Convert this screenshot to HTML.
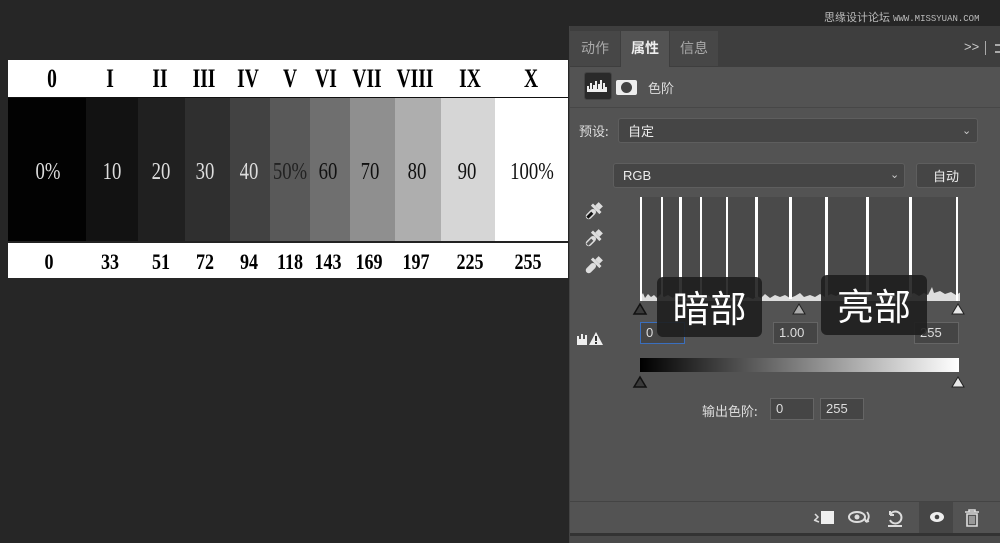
<!DOCTYPE html>
<html><head><meta charset="utf-8"><style>
*{margin:0;padding:0;box-sizing:border-box}
body{width:1000px;height:543px;background:#262626;position:relative;overflow:hidden;font-family:"Liberation Sans","Noto Sans CJK SC",sans-serif}
.a{position:absolute}
.chart{left:8px;top:60px;width:560px;height:218px;background:#fff}
.rn{top:0;height:37px;line-height:37px;font-family:"Liberation Serif",serif;font-weight:bold;font-size:26px;text-align:center;color:#000;transform:scaleX(.75)}
.col{top:38px;height:143px;font-family:"Liberation Serif",serif;font-size:24px;text-align:center;line-height:148px;transform:scaleX(.78)}
.bn{top:183px;height:35px;line-height:38px;font-family:"Liberation Serif",serif;font-weight:bold;font-size:22px;text-align:center;color:#000;transform:scaleX(.82)}
.cjk{font-family:"Noto Sans CJK SC",sans-serif}
.box{background:#454545;border:1px solid #656565;color:#ddd;font-size:13px;padding-left:5px;line-height:20px}
</style></head><body>
<div class="a" style="left:824px;top:9px;color:#bbb;font-size:11px;white-space:nowrap">思缘设计论坛 <span style="font-family:'Liberation Mono',monospace;font-size:9px">WWW.MISSYUAN.COM</span></div>

<div class="a chart">
<div class="a" style="left:0;top:37px;width:560px;height:145px;background:#111"></div>
<div class="a" style="left:0;top:38px;width:78px;height:143px;background:#020202"></div>
<div class="a" style="left:78px;top:38px;width:52px;height:143px;background:#121212"></div>
<div class="a" style="left:130px;top:38px;width:47px;height:143px;background:#202020"></div>
<div class="a" style="left:177px;top:38px;width:45px;height:143px;background:#2f2f2f"></div>
<div class="a" style="left:222px;top:38px;width:40px;height:143px;background:#424242"></div>
<div class="a" style="left:262px;top:38px;width:40px;height:143px;background:#595959"></div>
<div class="a" style="left:302px;top:38px;width:40px;height:143px;background:#6f6f6f"></div>
<div class="a" style="left:342px;top:38px;width:45px;height:143px;background:#8f8f8f"></div>
<div class="a" style="left:387px;top:38px;width:46px;height:143px;background:#aeaeae"></div>
<div class="a" style="left:433px;top:38px;width:54px;height:143px;background:#d6d6d6"></div>
<div class="a" style="left:487px;top:38px;width:73px;height:143px;background:#fff"></div>
<div class="a" style="left:0;top:181px;width:560px;height:2px;background:#222"></div>
<div class="a rn" style="left:24px;width:40px">0</div>
<div class="a rn" style="left:82px;width:40px">I</div>
<div class="a rn" style="left:132px;width:40px">II</div>
<div class="a rn" style="left:176px;width:40px">III</div>
<div class="a rn" style="left:220px;width:40px">IV</div>
<div class="a rn" style="left:262px;width:40px">V</div>
<div class="a rn" style="left:298px;width:40px">VI</div>
<div class="a rn" style="left:337px;width:44px">VII</div>
<div class="a rn" style="left:382px;width:50px">VIII</div>
<div class="a rn" style="left:440px;width:44px">IX</div>
<div class="a rn" style="left:503px;width:40px">X</div>
<div class="a col" style="left:12px;width:56px;color:#ddd">0%</div>
<div class="a col" style="left:84px;width:40px;color:#ddd">10</div>
<div class="a col" style="left:133px;width:40px;color:#ddd">20</div>
<div class="a col" style="left:177px;width:40px;color:#ddd">30</div>
<div class="a col" style="left:221px;width:40px;color:#ddd">40</div>
<div class="a col" style="left:254px;width:56px;color:#222">50%</div>
<div class="a col" style="left:300px;width:40px;color:#111">60</div>
<div class="a col" style="left:342px;width:40px;color:#111">70</div>
<div class="a col" style="left:389px;width:40px;color:#111">80</div>
<div class="a col" style="left:439px;width:40px;color:#111">90</div>
<div class="a col" style="left:492px;width:64px;color:#111">100%</div>
<div class="a bn" style="left:21px;width:40px">0</div>
<div class="a bn" style="left:82px;width:40px">33</div>
<div class="a bn" style="left:133px;width:40px">51</div>
<div class="a bn" style="left:177px;width:40px">72</div>
<div class="a bn" style="left:221px;width:40px">94</div>
<div class="a bn" style="left:259px;width:46px">118</div>
<div class="a bn" style="left:297px;width:46px">143</div>
<div class="a bn" style="left:338px;width:46px">169</div>
<div class="a bn" style="left:385px;width:46px">197</div>
<div class="a bn" style="left:439px;width:46px">225</div>
<div class="a bn" style="left:497px;width:46px">255</div>
</div>

<!-- panel -->
<div class="a" style="left:569px;top:26px;width:431px;height:517px;background:#535353;border-left:1px solid #444"></div>
<div class="a" style="left:570px;top:26px;width:430px;height:41px;background:#3e3e3e"></div>
<div class="a cjk" style="left:570px;top:31px;width:50px;height:35px;background:#474747;color:#aaa;font-size:14px;line-height:35px;text-align:center">动作</div>
<div class="a cjk" style="left:621px;top:31px;width:48px;height:36px;background:#535353;color:#eee;font-size:14px;font-weight:bold;line-height:35px;text-align:center">属性</div>
<div class="a cjk" style="left:670px;top:31px;width:48px;height:35px;background:#474747;color:#aaa;font-size:14px;line-height:35px;text-align:center">信息</div>
<div class="a" style="left:964px;top:39px;color:#ccc;font-size:13px">&gt;&gt;</div>
<div class="a" style="left:985px;top:41px;width:1px;height:14px;background:#aaa"></div>
<div class="a" style="left:995px;top:44px;width:5px;height:9px;border-top:2px solid #aaa;border-bottom:2px solid #aaa"></div>

<div class="a" style="left:584px;top:72px;width:28px;height:28px;background:#2a2a2a;border-radius:3px;border:1px solid #444"></div>
<svg class="a" style="left:587px;top:78px" width="22" height="14"><path d="M0 14V8h2v3h1V5h2v6h1V7h2V3h2v8h1V6h2V2h2v9h1V5h2v4h2v5z" fill="#eee"/></svg>
<div class="a" style="left:616px;top:80px;width:21px;height:15px;background:#eee;border-radius:2px"></div>
<div class="a" style="left:621px;top:82px;width:11px;height:11px;background:#444;border-radius:50%"></div>
<div class="a cjk" style="left:648px;top:78px;color:#ddd;font-size:13px">色阶</div>
<div class="a" style="left:570px;top:107px;width:430px;height:1px;background:#474747"></div>

<div class="a cjk" style="left:579px;top:121px;color:#ddd;font-size:13px">预设:</div>
<div class="a cjk" style="left:618px;top:118px;width:360px;height:25px;background:#454545;border:1px solid #5e5e5e;border-radius:3px;color:#eee;font-size:13px;line-height:23px;padding-left:9px">自定</div>
<div class="a" style="left:962px;top:124px;color:#ccc;font-size:11px">&#8964;</div>

<div class="a" style="left:613px;top:163px;width:292px;height:25px;background:#454545;border:1px solid #5e5e5e;border-radius:3px;color:#eee;font-size:13px;line-height:23px;padding-left:9px">RGB</div>
<div class="a" style="left:890px;top:168px;color:#ccc;font-size:11px">&#8964;</div>
<div class="a cjk" style="left:916px;top:163px;width:60px;height:25px;background:#454545;border:1px solid #5e5e5e;border-radius:3px;color:#eee;font-size:13px;line-height:23px;text-align:center">自动</div>

<svg class="a" style="left:582px;top:201px" width="22" height="76">
<g transform="rotate(45 11 11)"><rect x="8" y="0" width="6" height="5" fill="#ddd"/><rect x="5" y="5" width="12" height="3" fill="#ddd"/><rect x="8" y="8" width="6" height="12" rx="3" fill="#ddd"/><rect x="9.5" y="12" width="3" height="7" fill="#111"/></g>
<g transform="translate(0,27) rotate(45 11 11)"><rect x="8" y="0" width="6" height="5" fill="#ddd"/><rect x="5" y="5" width="12" height="3" fill="#ddd"/><rect x="8" y="8" width="6" height="12" rx="3" fill="#ddd"/><rect x="9.5" y="12" width="3" height="7" fill="#555"/></g>
<g transform="translate(0,54) rotate(45 11 11)"><rect x="8" y="0" width="6" height="5" fill="#ddd"/><rect x="5" y="5" width="12" height="3" fill="#ddd"/><rect x="8" y="8" width="6" height="12" rx="3" fill="#ddd"/></g>
</svg>

<div class="a" style="left:640px;top:197px;width:318px;height:104px;background:#4a4a4a"></div>
<svg class="a" style="left:640px;top:197px" width="320" height="105">
<path d="M0 104V95l1 4 2-3 2 5 3-4 3 3 3-2 3 3 4-4 3 3 4-2 5 3 4-4 3 4 4-2 3 3 4-3 4 2 5-2 4 3 4-4 4 3 6-2 5 3 5-3 4 2 5-2 6 3 5-2 5 2 4-3 4 2 4-4 5 4 5-3 5 2 5-2 5 3 5-2 5-3 4 4 6-2 5 2 5-3 5 3 6-3 5 2 5-3 6 3 6-2 5 2 5-3 5 3 5-2 5 2 5-4 4 3 5-2 6 3 5-3 5 2 6-2 5 3 5-3 4 2 4-8 2 6 6-2 5 3 6-2 5 3 5-3 5 2 4-3 4-6 2 5 2 2V104z" fill="#ddd"/>
<g fill="#fff">
<rect x="0" y="0" width="2" height="104"/><rect x="21" y="0" width="2" height="100"/><rect x="39" y="0" width="3" height="100"/><rect x="60" y="0" width="2" height="100"/><rect x="86" y="0" width="2" height="100"/><rect x="115" y="0" width="3" height="100"/><rect x="149" y="0" width="3" height="102"/><rect x="185" y="0" width="3" height="100"/><rect x="226" y="0" width="3" height="100"/><rect x="269" y="0" width="3" height="100"/><rect x="316" y="0" width="2" height="104"/>
</g></svg>
<svg class="a" style="left:632px;top:301px" width="340" height="14">
<path d="M2 13L8 3l6 10z" fill="#3a3a3a" stroke="#111" stroke-width="1.5"/>
<path d="M161 13l6-10 6 10z" fill="#aaa" stroke="#222" stroke-width="1"/>
<path d="M320 13l6-10 6 10z" fill="#e8e8e8" stroke="#222" stroke-width="1"/>
</svg>

<svg class="a" style="left:577px;top:330px" width="30" height="16"><path d="M0 15V6h2v3h2V4h2v5h2V5h2v10z" fill="#eee"/><path d="M12 15L19 2l7 13z" fill="#eee"/><rect x="18" y="6" width="2" height="5" fill="#333"/><rect x="18" y="12" width="2" height="2" fill="#333"/></svg>
<div class="a box" style="left:640px;top:322px;width:45px;height:22px;border:1px solid #3a6fbf">0</div>
<div class="a box" style="left:773px;top:322px;width:45px;height:22px">1.00</div>
<div class="a box" style="left:914px;top:322px;width:45px;height:22px">255</div>

<div class="a cjk" style="left:657px;top:277px;width:105px;height:60px;background:rgba(30,30,30,.9);border-radius:6px;color:#fff;font-size:37px;line-height:58px;text-align:center">暗部</div>
<div class="a cjk" style="left:821px;top:275px;width:106px;height:60px;background:rgba(30,30,30,.9);border-radius:6px;color:#fff;font-size:37px;line-height:58px;text-align:center">亮部</div>

<div class="a" style="left:640px;top:358px;width:319px;height:14px;background:linear-gradient(90deg,#000,#fff)"></div>
<svg class="a" style="left:632px;top:374px" width="340" height="14">
<path d="M2 13L8 3l6 10z" fill="#3a3a3a" stroke="#111" stroke-width="1.5"/>
<path d="M320 13l6-10 6 10z" fill="#e8e8e8" stroke="#222" stroke-width="1"/>
</svg>
<div class="a cjk" style="left:702px;top:401px;color:#ddd;font-size:13px">输出色阶:</div>
<div class="a box" style="left:770px;top:398px;width:44px;height:22px">0</div>
<div class="a box" style="left:820px;top:398px;width:44px;height:22px">255</div>

<div class="a" style="left:570px;top:501px;width:430px;height:1px;background:#444"></div>
<div class="a" style="left:919px;top:502px;width:34px;height:31px;background:#464646"></div>
<div class="a" style="left:570px;top:533px;width:430px;height:3px;background:#333"></div>
<div class="a" style="left:570px;top:536px;width:430px;height:7px;background:#4a4a4a"></div>
<svg class="a" style="left:810px;top:506px" width="180" height="24">
<path d="M5 8l3 3-3 3M4 14l5 2" stroke="#ddd" stroke-width="1.5" fill="none"/><rect x="11" y="5" width="13" height="13" fill="#eee"/>
<ellipse cx="47" cy="11" rx="8" ry="5" fill="none" stroke="#ddd" stroke-width="2"/><circle cx="47" cy="11" r="2.5" fill="#ddd"/><path d="M57 6q4 5-1 10m0 0l-1-3m1 3l3-1" stroke="#ddd" stroke-width="1.8" fill="none"/>
<path d="M80 9a6 6 0 1 1 0 5M80 9l0-4m0 4l4 0" stroke="#ddd" stroke-width="2" fill="none"/><rect x="78" y="19" width="14" height="2" fill="#ddd"/>
<ellipse cx="127" cy="11" rx="7" ry="5" fill="#eee"/><circle cx="127" cy="11" r="2.3" fill="#444"/>
<path d="M155 6h14M159 6V4h6v2M157 8h10v12h-10z" stroke="#ddd" stroke-width="1.6" fill="none"/><path d="M160 10v8M162 10v8M164 10v8" stroke="#ddd" stroke-width="1"/>
</svg>
</body></html>
